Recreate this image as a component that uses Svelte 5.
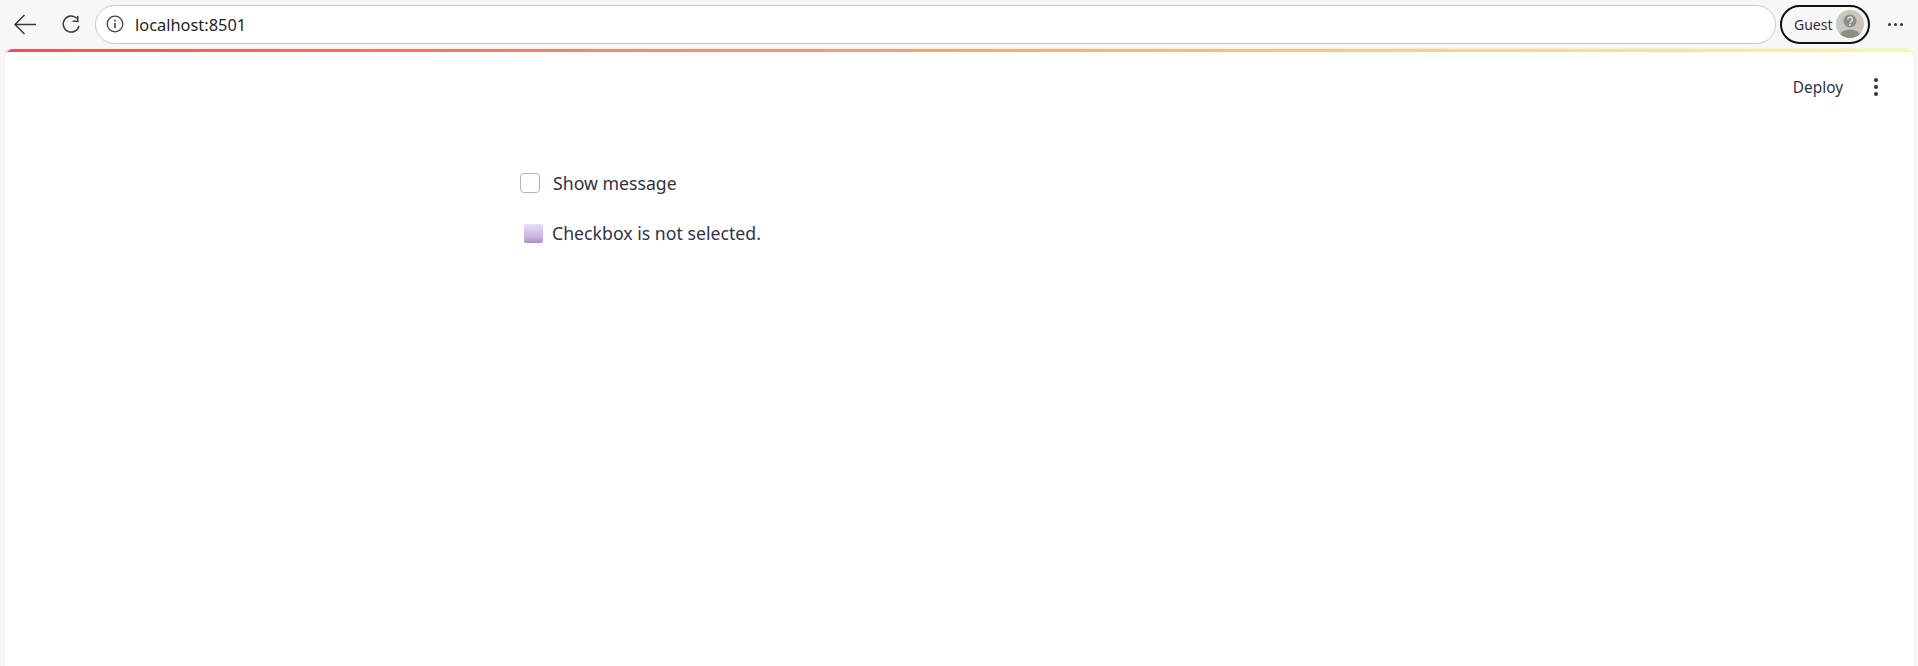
<script>
	let showMessage = false;
</script>

<div class="browser">
	<div class="toolbar">
		<button class="nav back" aria-label="Back">
			<svg width="24" height="24" viewBox="0 0 24 24" fill="none" stroke="#3b3b3b" stroke-width="1.5">
				<path d="M23 12.5H2M11.5 3 2 12.5 11.5 22" />
			</svg>
		</button>
		<button class="nav reload" aria-label="Reload">
			<svg width="20" height="20" viewBox="0 0 20 20" fill="none" stroke="#3b3b3b" stroke-width="1.5">
				<path d="M16 4.5A8 8 0 1 0 18 12" />
				<path d="M16.8 2v5.2h-5.2" />
			</svg>
		</button>
		<div class="address">
			<svg width="18" height="18" viewBox="0 0 18 18" fill="none" stroke="#444" stroke-width="1.3">
				<circle cx="9" cy="9" r="7.8" />
				<path d="M9 8v5" stroke-width="1.6" />
				<path d="M9 4.8v1.6" stroke-width="1.6" />
			</svg>
			<span>localhost:8501</span>
		</div>
		<div class="profile">
			<span>Guest</span>
			<svg width="28" height="28" viewBox="0 0 28 28">
				<defs>
					<clipPath id="avatar"><circle cx="14" cy="14" r="14" /></clipPath>
				</defs>
				<circle cx="14" cy="14" r="14" fill="#c9c6c2" />
				<g clip-path="url(#avatar)">
					<ellipse cx="14" cy="27" rx="11" ry="7.5" fill="#8f8b86" />
					<circle cx="14" cy="11" r="6.5" fill="#8f8b86" />
				</g>
				<path d="M11.8 9.4a2.3 2.3 0 1 1 3.4 2c-.9.5-1.2 1-1.2 1.8" fill="none" stroke="#e4e2df" stroke-width="1.4" />
				<circle cx="14" cy="15" r=".9" fill="#e4e2df" />
			</svg>
		</div>
		<button class="nav more" aria-label="Settings and more">
			<i></i><i></i><i></i>
		</button>
	</div>

	<main class="page">
		<div class="decoration"></div>
		<header class="app-header">
			<span class="deploy">Deploy</span>
			<button class="kebab" aria-label="Main menu"><i></i><i></i><i></i></button>
		</header>
		<section class="block">
			<label class="check">
				<input type="checkbox" bind:checked={showMessage} />
				<span class="box"></span>
				<span>Show message</span>
			</label>
			<div class="status">
				<span class="swatch"></span>
				<span>{showMessage ? 'Checkbox is selected.' : 'Checkbox is not selected.'}</span>
			</div>
		</section>
	</main>
</div>

<style>
	:global(body) {
		margin: 0;
		background: #f7f7f7;
		overflow: hidden;
	}
	button {
		background: none;
		border: none;
		padding: 0;
	}
	.browser {
		height: 666px;
		display: flex;
		flex-direction: column;
		font-family: "Noto Sans", sans-serif;
		color: #31333f;
	}
	.toolbar {
		height: 49px;
		flex: none;
		display: flex;
		align-items: center;
		padding: 0 0 1px 13px;
		box-sizing: border-box;
	}
	.nav {
		display: flex;
		align-items: center;
		justify-content: center;
	}
	.back {
		width: 24px;
	}
	.reload {
		width: 20px;
		margin-left: 24px;
	}
	.address {
		width: 1681px;
		height: 39px;
		margin-left: 14px;
		padding-left: 10px;
		box-sizing: border-box;
		display: flex;
		align-items: center;
		gap: 11px;
		background: #fff;
		border: 1px solid #c9c9c9;
		border-radius: 20px;
		font-size: 16.4px;
		color: #1f1f1f;
	}
	.profile {
		width: 90px;
		height: 39px;
		margin-left: 4px;
		padding: 0 4px 0 12px;
		box-sizing: border-box;
		display: flex;
		align-items: center;
		justify-content: space-between;
		border: 2px solid #111;
		border-radius: 20px;
		font-size: 14px;
		color: #333;
	}
	.more {
		margin-left: 18px;
		gap: 3px;
	}
	.more i {
		width: 3px;
		height: 3px;
		border-radius: 50%;
		background: #333;
	}
	.page {
		flex: 1;
		margin: 0 4px 0 5px;
		background: #fff;
		border-radius: 8px 8px 0 0;
		overflow: hidden;
		box-shadow: 0 0 1px #bbb;
	}
	.decoration {
		height: 3px;
		background: linear-gradient(90deg, #ff4b4b, #fffd80);
	}
	.app-header {
		height: 70px;
		display: flex;
		align-items: center;
		justify-content: flex-end;
		padding-right: 35px;
		gap: 30px;
	}
	.deploy {
		font-size: 15.4px;
	}
	.kebab {
		display: flex;
		flex-direction: column;
		align-items: center;
		gap: 2.5px;
		width: 6px;
	}
	.kebab i {
		width: 4.5px;
		height: 4.5px;
		border-radius: 50%;
		background: #31333f;
	}
	.block {
		margin: 48px 0 0 515px;
		display: flex;
		flex-direction: column;
		gap: 24px;
		font-size: 17.7px;
	}
	.check {
		display: flex;
		align-items: center;
		height: 26px;
	}
	.check input {
		position: absolute;
		opacity: 0;
	}
	.box {
		width: 18px;
		height: 18px;
		margin-right: 13px;
		border: 1px solid #b5b5b8;
		border-radius: 4px;
		background: #fff;
	}
	.check input:checked + .box {
		background: #ff4b4b;
		border-color: #ff4b4b;
	}
	.status {
		display: flex;
		align-items: center;
		height: 26px;
		padding-left: 4px;
	}
	.swatch {
		width: 19px;
		height: 19px;
		margin-right: 9px;
		border-radius: 2px;
		background: linear-gradient(180deg, #e9def3, #c9b2e0 70%, #a98ccb);
	}
</style>
